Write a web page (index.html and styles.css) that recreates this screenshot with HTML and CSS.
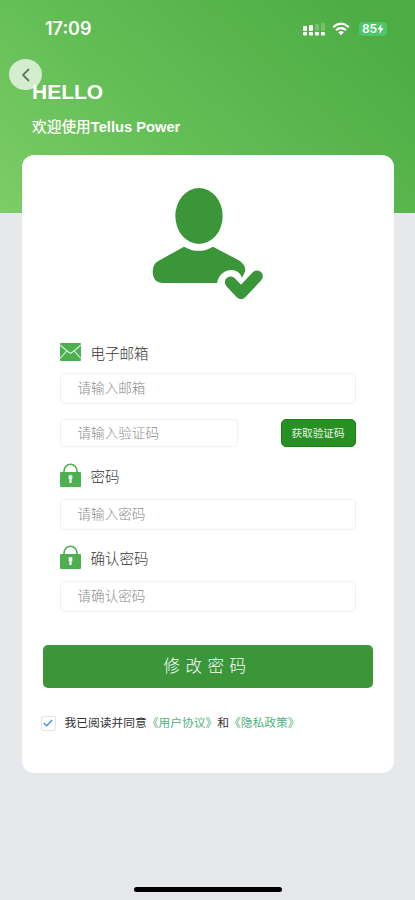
FILE: index.html
```html
<!DOCTYPE html>
<html lang="zh-CN">
<head>
<meta charset="utf-8">
<meta name="viewport" content="width=device-width, initial-scale=1">
<title>修改密码</title>
<link rel="stylesheet" href="styles.css">
</head>
<body>
<div class="screen">
  <header class="hero">
    <div class="status">
      <span class="time">17:09</span>
      <svg class="signal" viewBox="0 0 22 13" width="22" height="13">
        <g fill="#fff"><rect x="0" y="3" width="4" height="5" rx="1"/><rect x="6" y="2" width="4" height="6" rx="1"/><rect x="0" y="9" width="4" height="3.4" rx="1"/><rect x="6" y="9" width="4" height="3.4" rx="1"/><rect x="12" y="9" width="4" height="3.4" rx="1"/><rect x="18" y="9" width="4" height="3.4" rx="1"/></g>
        <g fill="#fff" opacity=".2"><rect x="12" y="1" width="4" height="7" rx="1"/><rect x="18" y="0" width="4" height="8" rx="1"/></g>
      </svg>
      <svg class="wifi" viewBox="0 0 18 14" width="18" height="14">
        <path d="M1.2 5.2Q9-1.8 16.8 5.2M4 8.2Q9 3.8 14 8.2" fill="none" stroke="#fff" stroke-width="2.2"/>
        <path d="M6.2 10.2Q9 8 11.8 10.2L9 13.2Z" fill="#fff"/>
      </svg>
      <span class="battery">85<svg viewBox="0 0 7 10" width="7" height="10"><path d="M4.5 0L.5 5.6H3L2.2 10L6.5 4.2H4Z" fill="#fff"/></svg></span>
    </div>
    <div class="back"><svg viewBox="0 0 10 16" width="10" height="16"><path d="M8 2L2 8L8 14" fill="none" stroke="#607b5c" stroke-width="1.9"/></svg></div>
    <h1>HELLO</h1>
    <p class="welcome">欢迎使用<span>Tellus Power</span></p>
  </header>

  <main class="card">
    <svg class="avatar" viewBox="30 30 348 348" width="116" height="116">
      <g fill="#3a9638">
        <ellipse cx="177" cy="123" rx="71" ry="84"/>
        <path d="M132 215Q176 240 219 215L296 256Q316 267 316 288L306 309C297 273 240 277 231 324H66Q38 321 38 291Q38 267 55 258Z"/>
      </g>
      <path d="M272 322L303 355L351 304" fill="none" stroke="#3a9638" stroke-width="35" stroke-linecap="round" stroke-linejoin="round"/>
    </svg>

    <form class="form">
      <div class="label mail-label">
        <svg viewBox="0 0 21 18" width="21" height="18"><rect width="21" height="18" rx="1" fill="#4caf50"/><path d="M0 2L9 9.5Q10.5 10.7 12 9.5L21 2M0 15.5L6.7 8.2M21 15.5L14.3 8.2" fill="none" stroke="#d9f1da" stroke-width="1.1"/></svg>
        <span>电子邮箱</span>
      </div>
      <div class="field mail">请输入邮箱</div>
      <div class="code-row">
        <div class="field code">请输入验证码</div>
        <div class="get-code">获取验证码</div>
      </div>
      <div class="label pass-label">
        <svg viewBox="0 0 21 24" width="21" height="24"><path d="M4 11V8A6.5 6.8 0 0 1 17 8V11" fill="none" stroke="#4caf50" stroke-width="1.6"/><rect y="9" width="21" height="15" rx="1" fill="#4caf50"/><path d="M8.7 12.2H12.3V16H11.6V20H9.4V16H8.7Z" fill="#fff"/></svg>
        <span>密码</span>
      </div>
      <div class="field pass">请输入密码</div>
      <div class="label confirm-label">
        <svg viewBox="0 0 21 24" width="21" height="24"><path d="M4 11V8A6.5 6.8 0 0 1 17 8V11" fill="none" stroke="#4caf50" stroke-width="1.6"/><rect y="9" width="21" height="15" rx="1" fill="#4caf50"/><path d="M8.7 12.2H12.3V16H11.6V20H9.4V16H8.7Z" fill="#fff"/></svg>
        <span>确认密码</span>
      </div>
      <div class="field confirm">请确认密码</div>
    </form>

    <div class="submit">修改密码</div>
    <div class="agree">
      <span class="check"><svg viewBox="0 0 10 8" width="10" height="8"><path d="M.8 4L3.7 6.8L9.2 1" fill="none" stroke="#4a90d9" stroke-width="1.3"/></svg></span>
      <span class="terms">我已阅读并同意<a>《用户协议》</a>和<a>《隐私政策》</a></span>
    </div>
  </main>
  <div class="home"></div>
</div>
</body>
</html>
```
FILE: styles.css
```css
* { box-sizing: border-box; }
body { margin: 0; }
svg { display: block; flex: none; }

.screen {
  display: flex;
  flex-direction: column;
  align-items: center;
  width: 415px;
  height: 900px;
  overflow: hidden;
  background: #e7e8ec;
  font-family: "Liberation Sans", "Noto Sans CJK SC", sans-serif;
}

.hero {
  position: relative;
  flex: none;
  width: 100%;
  height: 213px;
  padding: 17px 27px 0 32px;
  color: #fff;
  background: linear-gradient(42deg, #7dcd67 0%, #62bd55 42%, #4dad44 90%);
}

.status {
  display: flex;
  align-items: center;
  height: 24px;
  padding-left: 13px;
}

.time {
  font: 600 18px/24px Inter, sans-serif;
}

.signal { margin-left: auto; }
.wifi { margin: 0 9px 0 7px; }

.battery {
  display: flex;
  align-items: center;
  justify-content: center;
  width: 28px;
  height: 14px;
  margin-right: 1px;
  border-radius: 4px;
  background: #4fc56a;
  font: 600 12px/14px Inter, sans-serif;
}

.back {
  position: absolute;
  left: 9px;
  top: 59px;
  display: flex;
  align-items: center;
  justify-content: center;
  width: 33px;
  height: 31px;
  border-radius: 50%;
  background: rgba(255, 255, 255, .7);
}

h1 {
  position: relative;
  margin: 38px 0 0;
  font-size: 21px;
  line-height: 25px;
}

.welcome {
  margin: 12px 0 0;
  font-size: 14.7px;
  line-height: 22px;
  font-weight: 500;
  white-space: nowrap;
}

.welcome span { font-weight: 700; }

.card {
  position: relative;
  display: flex;
  flex: none;
  flex-direction: column;
  width: 372px;
  height: 618px;
  margin-top: -58px;
  padding: 30px 21px 0;
  border-radius: 12px;
  background: #fff;
}

.avatar { margin-left: 107px; }

.form {
  display: flex;
  flex-direction: column;
  width: 296px;
  margin-left: 17px;
}

.label {
  display: flex;
  align-items: center;
  gap: 10px;
  height: 24px;
  font-size: 14.5px;
  font-weight: 300;
  line-height: 24px;
  color: #333;
}

.label span { padding-top: 4px; }
.mail-label { margin-top: 39px; }

.field {
  width: 296px;
  height: 31px;
  padding-left: 17px;
  border: 1px solid #eff1f2;
  border-radius: 4px;
  font-size: 13.6px;
  font-weight: 300;
  line-height: 29px;
  color: #8c8c8c;
}

.mail { margin-top: 9px; }

.code-row {
  display: flex;
  justify-content: space-between;
  margin-top: 15px;
}

.code { width: 178px; height: 28px; line-height: 28px; }

.get-code {
  width: 75px;
  height: 28px;
  border: 1px solid #178012;
  border-radius: 5px;
  background: #279022;
  color: #e8f5e4;
  font-size: 10.6px;
  line-height: 27px;
  text-align: center;
}

.pass-label { margin-top: 16px; }
.pass { margin-top: 12px; }
.confirm-label { margin-top: 15px; }
.confirm { margin-top: 12px; }

.submit {
  height: 43px;
  margin-top: 33px;
  border-radius: 5px;
  background: #3a9638;
  color: #fff;
  font-size: 16.5px;
  font-weight: 300;
  line-height: 43px;
  letter-spacing: 5.5px;
  text-align: center;
}

.agree {
  display: flex;
  align-items: center;
  gap: 9px;
  height: 20px;
  margin-top: 25px;
  margin-left: -2px;
}

.check {
  display: flex;
  align-items: center;
  justify-content: center;
  width: 15px;
  height: 15px;
  border: 1px solid #e2e5e9;
  border-radius: 2px;
}

.terms {
  font-size: 11.75px;
  line-height: 20px;
  color: #333;
  white-space: nowrap;
}

.terms a { color: #4fb583; }

.home {
  width: 148px;
  height: 5px;
  margin-top: 114px;
  border-radius: 3px;
  background: #000;
}
```
